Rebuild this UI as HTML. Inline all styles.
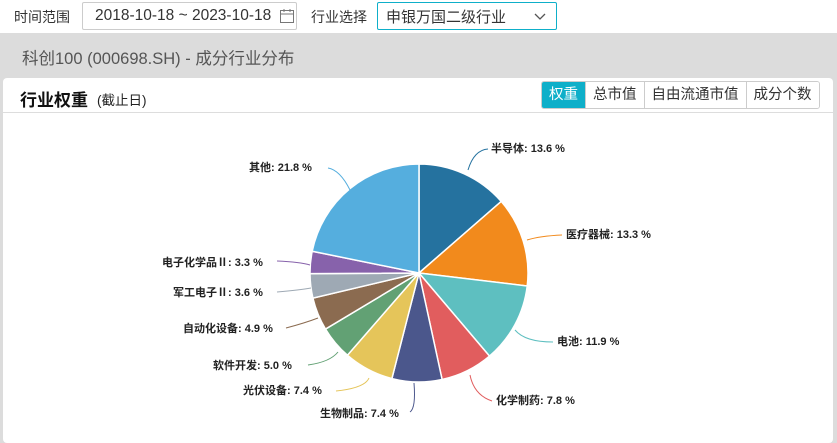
<!DOCTYPE html>
<html><head><meta charset="utf-8"><style>
*{box-sizing:border-box;margin:0;padding:0}
body{width:837px;height:443px;overflow:hidden;background:#dcdcdc;font-family:"Liberation Sans","Noto Sans CJK SC",sans-serif;position:relative;color:#333}
.top{position:absolute;left:0;top:0;width:837px;height:33px;background:#fff}
.abs{position:absolute;white-space:nowrap}
.box{position:absolute;border:1px solid #ccc;border-radius:2px;background:#fff}
.card{position:absolute;left:3px;top:78px;width:830px;height:365px;background:#fff;border-radius:4px}
.btns{position:absolute;left:541px;top:81px;height:28px;display:flex;border:1px solid #ccc;border-radius:3px;overflow:hidden;font-size:14.5px}
.btns div{padding:0 7px;line-height:26px;border-left:1px solid #ccc;color:#333;background:#fff}
.btns div.on{background:#0eafc9;color:#fff;border-left:none}
.lbl{position:absolute;font-size:11px;font-weight:bold;color:#222;white-space:nowrap;line-height:12px}
</style></head><body>
<div class="top"></div>
<div class="abs" style="left:14px;top:7px;font-size:14px">时间范围</div>
<div class="box" style="left:82px;top:2px;width:215px;height:28px"></div>
<div class="abs" style="left:95px;top:7px;font-size:15.5px;color:#333">2018-10-18 ~ 2023-10-18</div>
<svg class="abs" style="left:279px;top:8px" width="16" height="16" viewBox="0 0 16 16"><rect x="1.5" y="2.5" width="13" height="12" fill="none" stroke="#777"/><line x1="1.5" y1="6" x2="14.5" y2="6" stroke="#777"/><line x1="5" y1="1" x2="5" y2="4" stroke="#777"/><line x1="11" y1="1" x2="11" y2="4" stroke="#777"/></svg>
<div class="abs" style="left:311px;top:7px;font-size:14px">行业选择</div>
<div class="box" style="left:377px;top:2px;width:180px;height:28px;border-color:#0eafc9"></div>
<div class="abs" style="left:386px;top:6px;font-size:15px">申银万国二级行业</div>
<svg class="abs" style="left:534px;top:13px" width="12" height="8"><polyline points="1,1 6,6 11,1" fill="none" stroke="#555" stroke-width="1.3"/></svg>
<div class="abs" style="left:22px;top:45px;font-size:16.5px;color:#555">科创100 (000698.SH) - 成分行业分布</div>
<div class="card"></div>
<div class="abs" style="left:20px;top:86px;font-size:17px;font-weight:bold;color:#111">行业权重</div>
<div class="abs" style="left:97px;top:89px;font-size:13.5px;color:#222">(截止日)</div>
<div class="abs" style="left:3px;top:112px;width:830px;height:1px;background:#ddd"></div>
<div class="btns"><div class="on">权重</div><div>总市值</div><div>自由流通市值</div><div>成分个数</div></div>
<svg class="abs" style="left:0;top:0" width="837" height="443" id="pie"></svg>
<div class="lbl" style="left:491px;top:143px">半导体: 13.6 %</div>
<div class="lbl" style="left:566px;top:229px">医疗器械: 13.3 %</div>
<div class="lbl" style="left:557px;top:336px">电池: 11.9 %</div>
<div class="lbl" style="left:496px;top:395px">化学制药: 7.8 %</div>
<div class="lbl" style="left:320px;top:408px">生物制品: 7.4 %</div>
<div class="lbl" style="left:243px;top:385px">光伏设备: 7.4 %</div>
<div class="lbl" style="left:213px;top:360px">软件开发: 5.0 %</div>
<div class="lbl" style="left:183px;top:323px">自动化设备: 4.9 %</div>
<div class="lbl" style="left:173px;top:287px">军工电子Ⅱ: 3.6 %</div>
<div class="lbl" style="left:162px;top:257px">电子化学品Ⅱ: 3.3 %</div>
<div class="lbl" style="left:249px;top:162px">其他: 21.8 %</div>
<script>
var d=[[13.6,"#25729f"],[13.3,"#f28a1c"],[11.9,"#5ebfc0"],[7.8,"#e15d5e"],[7.4,"#4b578c"],[7.4,"#e5c55a"],[5.0,"#62a174"],[4.9,"#8b6b50"],[3.6,"#9ea9b4"],[3.3,"#8762ab"],[21.8,"#55aede"]];
var cx=419,cy=273,r=109,a=0,s="";
d.forEach(function(e){var a2=a+e[0]/100*2*Math.PI;
var x1=cx+r*Math.sin(a),y1=cy-r*Math.cos(a),x2=cx+r*Math.sin(a2),y2=cy-r*Math.cos(a2);
s+='<path d="M'+cx+','+cy+'L'+x1+','+y1+'A'+r+','+r+' 0 '+(a2-a>Math.PI?1:0)+' 1 '+x2+','+y2+'Z" fill="'+e[1]+'" stroke="#fff" stroke-width="1.5"/>';a=a2;});
var L=[["M468,170 Q474,150 488,149","#25729f"],["M527,240 Q540,236 562,235","#f28a1c"],["M515,330 Q525,342 553,342","#5ebfc0"],["M470,375 Q474,395 492,401","#e15d5e"],["M414,383 Q416,408 410,412","#4b578c"],["M369,378 Q365,388 336,391","#e5c55a"],["M338,352 Q330,362 308,365","#62a174"],["M318,318 Q305,323 286,328","#8b6b50"],["M311,288 Q300,290 277,292","#9ea9b4"],["M310,265 Q300,262 277,261","#8762ab"],["M350,190 Q340,170 328,168","#55aede"]];
L.forEach(function(l){s+='<path d="'+l[0]+'" fill="none" stroke="'+l[1]+'" stroke-width="1"/>';});
document.getElementById("pie").innerHTML=s;
</script>
</body></html>
